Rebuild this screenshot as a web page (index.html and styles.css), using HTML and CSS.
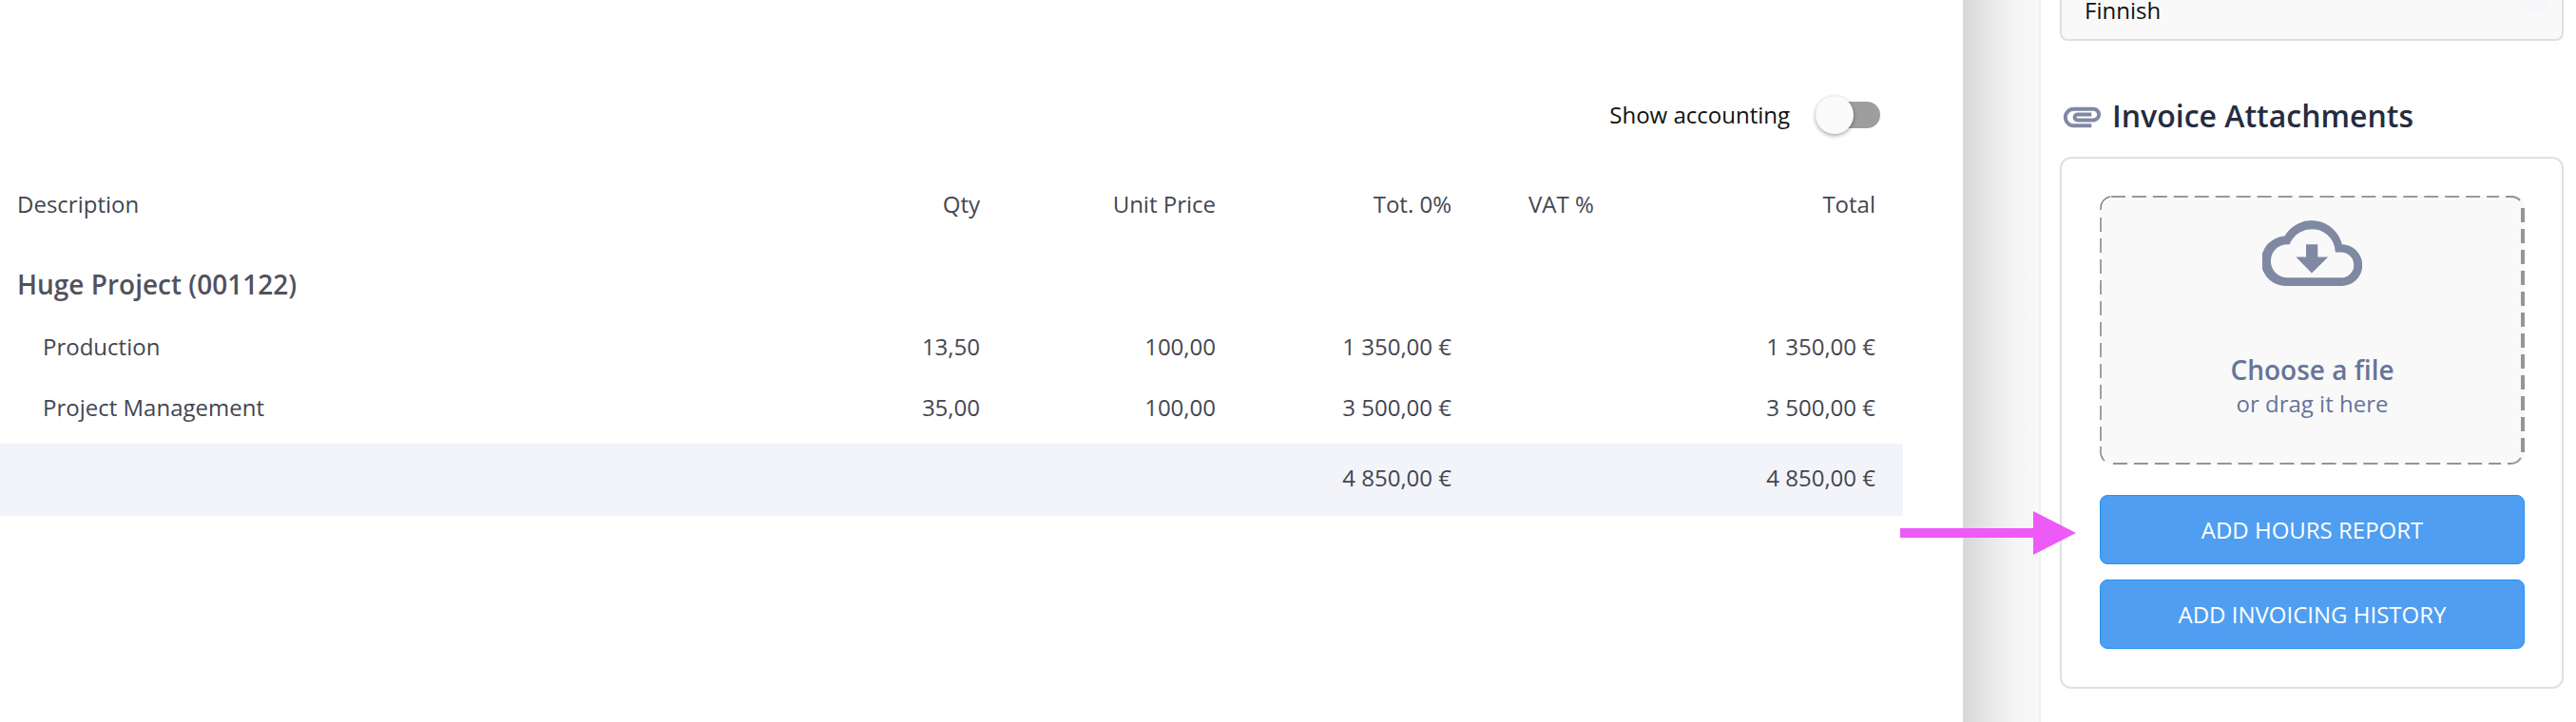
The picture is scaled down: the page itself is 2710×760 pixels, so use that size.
FILE: index.html
```html
<!DOCTYPE html>
<html lang="en">
<head>
<meta charset="utf-8">
<title>Invoice</title>
<link rel="stylesheet" href="styles.css">
</head>
<body>
<div class="page">
  <main class="invoice">
    <div class="toolbar">
      <label for="accounting">Show accounting</label>
      <input class="switch" type="checkbox" id="accounting">
    </div>
    <table class="lines">
      <colgroup>
        <col>
        <col class="col-amount">
        <col class="col-amount">
        <col class="col-amount">
        <col class="col-amount">
        <col class="col-total">
      </colgroup>
      <thead>
        <tr><th class="text">Description</th><th>Qty</th><th>Unit Price</th><th>Tot. 0%</th><th class="vat">VAT %</th><th>Total</th></tr>
      </thead>
      <tbody>
        <tr class="project"><th class="text" colspan="6">Huge Project (001122)</th></tr>
        <tr class="item"><td class="text">Production</td><td>13,50</td><td>100,00</td><td>1 350,00 €</td><td></td><td>1 350,00 €</td></tr>
        <tr class="item"><td class="text">Project Management</td><td>35,00</td><td>100,00</td><td>3 500,00 €</td><td></td><td>3 500,00 €</td></tr>
      </tbody>
      <tfoot>
        <tr><td></td><td></td><td></td><td>4 850,00 €</td><td></td><td>4 850,00 €</td></tr>
      </tfoot>
    </table>
  </main>
  <div class="gutter"></div>
  <aside class="sidebar">
    <select class="language" aria-label="Language"><option>Finnish</option></select>
    <h2 class="heading">
      <svg class="clip" viewBox="0 0 24 24" aria-hidden="true"><path d="M2 12.5C2 9.46 4.46 7 7.5 7H18c2.21 0 4 1.79 4 4s-1.79 4-4 4H9.5C8.12 15 7 13.88 7 12.5S8.12 10 9.5 10H17v2H9.41c-.55 0-.55 1 0 1H18c1.1 0 2-.9 2-2s-.9-2-2-2H7.5C5.57 9 4 10.57 4 12.5S5.57 16 7.5 16H17v2H7.5C4.46 18 2 15.54 2 12.5z"/></svg>
      Invoice Attachments
    </h2>
    <section class="attachments">
      <label class="drop" for="file">
        <svg class="dashes" viewBox="0 0 448 283" preserveAspectRatio="none" aria-hidden="true">
          <g class="thin">
            <path d="M1 15V13A12 12 0 0 1 11 1"/>
            <path stroke-dasharray="15 7" d="M12 1H421"/>
            <path stroke-dasharray="15 7" d="M1 23V258"/>
            <path d="M1 264V268A13 13 0 0 0 5 279"/>
          </g>
          <g class="medium">
            <path d="M428 1H433A12 12 0 0 1 443 5"/>
            <path stroke-dasharray="15 7" d="M14 282H423"/>
            <path d="M430 282H433A13 13 0 0 0 444 276"/>
          </g>
          <path class="thick" stroke-dasharray="15 7" d="M446 13V270"/>
        </svg>
        <svg class="cloud" viewBox="87 48 315 211" aria-hidden="true"><path fill-rule="evenodd" d="M157 101A99 99 0 0 1 339 127A66 66 0 0 1 336 259H166A79 79 0 0 1 157 101ZM173 127H166A53 53 0 0 0 166 233H336A40 40 0 0 0 336 152H318A75 75 0 0 0 173 127ZM225 127H262V167H295L243 218L193 167H225Z"/></svg>
        <strong>Choose a file</strong>
        <span>or drag it here</span>
        <input class="file" type="file" id="file">
      </label>
      <button class="action" type="button">ADD HOURS REPORT</button>
      <button class="action" type="button">ADD INVOICING HISTORY</button>
    </section>
  </aside>
  <svg class="pointer" viewBox="0 0 185 46" aria-hidden="true"><path d="M0 18H140V0L185 23L140 46V28H0Z"/></svg>
</div>
</body>
</html>
```

FILE: styles.css
```css
* {
  box-sizing: border-box;
}

body {
  margin: 0;
  background: #fff;
  color: #44464f;
  font: 24px/32px "Open Sans", sans-serif;
}

.page {
  position: relative;
  display: flex;
  min-height: 100vh;
  overflow: hidden;
}

.invoice {
  flex: 1;
  min-width: 0;
  padding: 101px 63px 0 0;
}

.toolbar {
  display: flex;
  align-items: center;
  justify-content: flex-end;
  gap: 27px;
  padding-right: 24px;
  color: #111;
}

.switch {
  appearance: none;
  display: flex;
  align-items: center;
  width: 68px;
  height: 40px;
  margin: 0;
}

.switch::before {
  content: "";
  flex: none;
  width: 40px;
  height: 40px;
  border-radius: 50%;
  background: #fafafa;
  box-shadow: 0 2px 4px rgba(0, 0, 0, .3), 0 0 4px rgba(0, 0, 0, .08);
  z-index: 1;
}

.switch::after {
  content: "";
  flex: none;
  width: 56px;
  height: 28px;
  margin-left: -28px;
  border-radius: 14px;
  background: #9e9e9e;
}

.lines {
  width: 100%;
  margin-top: 38px;
  border-collapse: collapse;
  table-layout: fixed;
}

.col-amount {
  width: 248px;
}

.col-total {
  width: 198px;
}

.lines th,
.lines td {
  padding: 16px 29px 16px 0;
  text-align: right;
  font-weight: 400;
  white-space: nowrap;
}

.lines thead th {
  padding-top: 20px;
  padding-bottom: 20px;
}

.lines .text {
  padding-left: 18px;
  text-align: left;
}

.lines .vat {
  padding-left: 52px;
  text-align: left;
}

.lines .project th {
  padding-top: 32px;
  padding-bottom: 18px;
  font-size: 28px;
  font-weight: 600;
  color: #50525c;
}

.lines .item .text {
  padding-left: 45px;
}

.lines .item:last-child td {
  padding-bottom: 22px;
}

.lines tfoot td {
  padding-top: 20px;
  padding-bottom: 24px;
  background: #f3f4f9;
}

.gutter {
  flex: none;
  width: 80px;
  background: linear-gradient(90deg, #d7d7d7, #e0e0e0 20%, #ebebeb 42%, #f4f4f4 68%, #f9f9f9);
}

.sidebar {
  flex: none;
  width: 565px;
  padding: 0 13px 32px 20px;
  border-left: 2px solid #f0f0f0;
}

.language {
  appearance: none;
  display: block;
  width: 100%;
  height: 64px;
  margin-top: -21px;
  padding: 0 24px;
  border: 2px solid #d9e0e7;
  border-radius: 8px;
  background: radial-gradient(circle at calc(100% - 28px) 12px, #f6f7fb 18px, transparent 19px) #f9f9f9;
  color: #111;
  font: inherit;
}

.heading {
  display: flex;
  align-items: center;
  gap: 8px;
  margin: 55px 0 19px;
  font-size: 32px;
  line-height: 48px;
  font-weight: 600;
  color: #252c40;
}

.clip {
  width: 47px;
  height: 47px;
  fill: #7f89a3;
}

.attachments {
  padding: 39px 39px 40px 40px;
  border: 2px solid #dbe1e8;
  border-radius: 12px;
}

.drop {
  position: relative;
  display: flex;
  flex-direction: column;
  align-items: center;
  margin-bottom: 32px;
  padding: 25px 0 46px;
  border-radius: 12px;
  background: #f9f9f9;
  color: #66759a;
  line-height: 36px;
}

.drop strong {
  font-size: 28px;
  font-weight: 600;
}

.dashes {
  position: absolute;
  inset: 0;
  width: 100%;
  height: 100%;
  fill: none;
}

.thin {
  stroke: #7b7b7b;
  stroke-width: 1.4;
}

.medium {
  stroke: #949494;
  stroke-width: 2;
}

.thick {
  stroke: #959595;
  stroke-width: 4;
}

.cloud {
  width: 105px;
  height: 70px;
  margin-bottom: 70px;
  fill: #7f89a3;
}

.file {
  position: absolute;
  inset: 0;
  opacity: 0;
}

.action {
  display: block;
  width: 100%;
  height: 73px;
  border: 1px solid #2692f0;
  border-radius: 8px;
  background: #4f9ef1;
  color: #fff;
  font: inherit;
}

.action + .action {
  margin-top: 16px;
}

.pointer {
  position: absolute;
  top: 538px;
  right: 526px;
  width: 185px;
  height: 46px;
  fill: #ec5af8;
}
```
